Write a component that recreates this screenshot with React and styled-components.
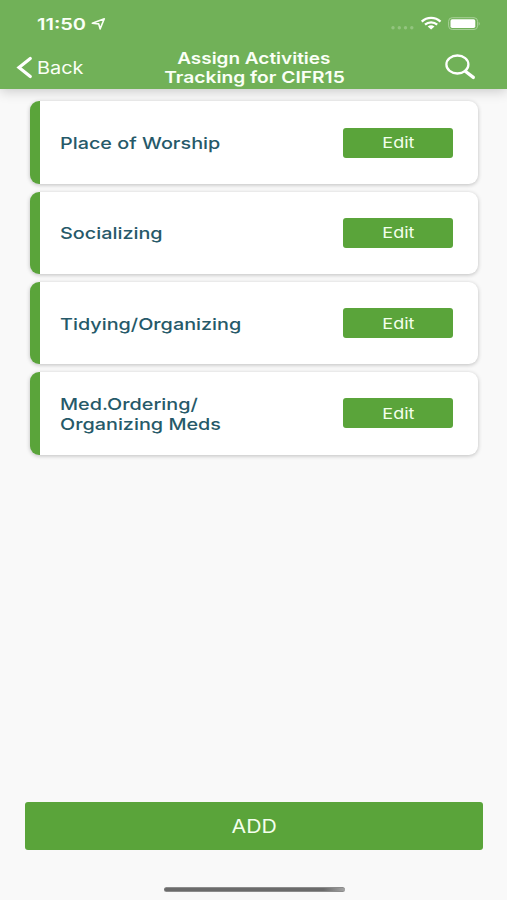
import React from 'react';
import styled, { createGlobalStyle } from 'styled-components';

const GlobalStyle = createGlobalStyle`
  * { box-sizing: border-box; }
  body { margin: 0; background: #f9f9f9; }
  button { border: 0; padding: 0; margin: 0; background: none; font: inherit; color: inherit; }
`;

const Screen = styled.div`
  width: 507px;
  height: 900px;
  display: flex;
  flex-direction: column;
  background: #f9f9f9;
  font-family: Inter, 'Liberation Sans', sans-serif;
  overflow: hidden;
`;

const Header = styled.header`
  height: 89px;
  flex: none;
  background: #71b158;
  color: #fafff6;
  box-shadow: 0 2px 12px rgba(0, 0, 0, 0.2);
`;

/* Wide lettering: glyphs are widened from the chosen edge. */
const Label = styled.span`
  display: inline-block;
  white-space: pre;
  font-size: ${(p) => p.$size}px;
  font-weight: ${(p) => p.$weight || 400};
  line-height: ${(p) => p.$line || 20}px;
  transform: scaleX(${(p) => p.$stretch || 1.2});
  transform-origin: ${(p) => p.$origin || 'center'};
`;

const StatusBar = styled.div`
  height: 46px;
  padding: 2px 27px 0 37px;
  display: flex;
  align-items: center;
  justify-content: space-between;
`;

const Clock = styled.div`
  width: 69px;
  display: flex;
  align-items: center;
  justify-content: space-between;
`;

const ClockText = styled.div`
  width: 50px;
`;

const StatusIcons = styled.div`
  display: flex;
  align-items: center;
`;

const NavBar = styled.div`
  height: 43px;
  display: grid;
  grid-template-columns: 154px 200px 1fr;
`;

const BackButton = styled.button`
  height: 43px;
  padding-left: 16px;
  display: flex;
  align-items: center;
  gap: 4px;
`;

const Title = styled.h1`
  margin: 0;
  padding-top: 3px;
  display: flex;
  flex-direction: column;
  align-items: center;
`;

const SearchButton = styled.button`
  height: 42px;
  padding-right: 31px;
  display: flex;
  justify-content: flex-end;
  align-items: center;
`;

const List = styled.main`
  flex: 1;
  padding: 12.4px 29px 0 30px;
  display: flex;
  flex-direction: column;
  gap: 8px;
`;

const Card = styled.article`
  height: 82.3px;
  padding: 0 25px 0 20px;
  border-left: 10px solid #5aa43a;
  border-radius: 9px;
  background: #fff;
  box-shadow: 0 1px 4px rgba(0, 0, 0, 0.24);
  display: flex;
  align-items: center;
  justify-content: space-between;
`;

const CardTitle = styled.div`
  padding-top: 1px;
  color: #265969;
  display: flex;
  flex-direction: column;
  align-items: flex-start;
`;

const EditButton = styled.button`
  width: 110px;
  height: 30px;
  padding-top: 1px;
  border-radius: 3px;
  background: #5aa43a;
  color: #f3ffed;
  display: flex;
  align-items: center;
  justify-content: center;
`;

const Footer = styled.footer`
  height: 98px;
  padding: 0 24px 8px 25px;
  display: flex;
  flex-direction: column;
  justify-content: space-between;
`;

const AddButton = styled.button`
  width: 100%;
  height: 48px;
  padding-top: 1px;
  border-radius: 3px;
  background: #5aa43a;
  color: #f3ffed;
  display: flex;
  align-items: center;
  justify-content: center;
`;

const HomeIndicator = styled.div`
  width: 181px;
  height: 5px;
  align-self: center;
  border-radius: 3px;
  background: linear-gradient(90deg, #6b6b6b 0 88%, #a5a5a5);
  border-top: 1px solid #8c8c8c;
  border-bottom: 1px solid #8c8c8c;
`;

const activities = [
  ['Place of Worship'],
  ['Socializing'],
  ['Tidying/Organizing'],
  ['Med.Ordering/', 'Organizing Meds'],
];

const LocationIcon = () => (
  <svg width="15" height="14" viewBox="0 0 15 14" fill="none">
    <path d="M1.3 6.3 13.3 1.8 9.1 11.9 7.7 6.9Z" stroke="#fafff6" strokeWidth="1.6" strokeLinejoin="round" />
  </svg>
);

const StatusGlyphs = () => (
  <svg width="90" height="16" viewBox="0 0 90 16">
    <g fill="#93c47f">
      <circle cx="3" cy="11.8" r="1.7" />
      <circle cx="9.3" cy="11.8" r="1.7" />
      <circle cx="15.5" cy="11.8" r="1.7" />
      <circle cx="21.8" cy="11.8" r="1.7" />
    </g>
    <g fill="none" stroke="#fff" strokeWidth="2.3">
      <path d="M31.7 5.7C37 .7 45.2.7 50.5 5.7" />
      <path d="M35 8.7C38.4 5.7 43.8 5.7 47.2 8.7" />
    </g>
    <path d="M37.7 10.5Q41.1 8 44.5 10.5L41.1 13.6Z" fill="#fff" />
    <rect x="58.6" y="1.7" width="29" height="11.8" rx="3.6" fill="none" stroke="#a8d198" />
    <rect x="60.5" y="3.3" width="24.8" height="8.7" rx="1.7" fill="#fff" />
    <path d="M88.7 5.7Q90.8 7.7 88.7 9.7Z" fill="#a8d198" />
  </svg>
);

const BackIcon = () => (
  <svg width="17" height="23" viewBox="0 0 17 23" fill="none">
    <path d="M14.3 2.5 3 11.5 14.3 20.5" stroke="#fff" strokeWidth="3.2" strokeLinecap="round" strokeLinejoin="miter" />
  </svg>
);

const SearchIcon = () => (
  <svg width="31" height="26" viewBox="0 0 31 26" fill="none" stroke="#fff">
    <ellipse cx="12.4" cy="10.5" rx="11" ry="9" strokeWidth="2.3" />
    <path d="M20.3 17.3 28.3 23.4" strokeWidth="3.3" strokeLinecap="round" />
  </svg>
);

export default function App() {
  return (
    <>
      <GlobalStyle />
      <Screen>
        <Header>
          <StatusBar>
            <Clock>
              <ClockText>
                <Label $size={16} $weight={600} $stretch={1.25} $origin="left">11:50</Label>
              </ClockText>
              <LocationIcon />
            </Clock>
            <StatusIcons><StatusGlyphs /></StatusIcons>
          </StatusBar>
          <NavBar>
            <BackButton>
              <BackIcon />
              <Label $size={17} $stretch={1.17} $origin="left">Back</Label>
            </BackButton>
            <Title>
              <Label $size={16.3} $weight={600} $line={18.5} $stretch={1.165}>Assign Activities</Label>
              <Label $size={16.3} $weight={600} $line={18.5} $stretch={1.18}>Tracking for CIFR15</Label>
            </Title>
            <SearchButton aria-label="Search"><SearchIcon /></SearchButton>
          </NavBar>
        </Header>
        <List>
          {activities.map((lines) => (
            <Card key={lines[0]}>
              <CardTitle>
                {lines.map((line) => (
                  <Label key={line} $size={16.5} $weight={500} $origin="left">
                    {line}
                  </Label>
                ))}
              </CardTitle>
              <EditButton><Label $size={15}>Edit</Label></EditButton>
            </Card>
          ))}
        </List>
        <Footer>
          <AddButton><Label $size={18} $stretch={1.18}>ADD</Label></AddButton>
          <HomeIndicator />
        </Footer>
      </Screen>
    </>
  );
}
